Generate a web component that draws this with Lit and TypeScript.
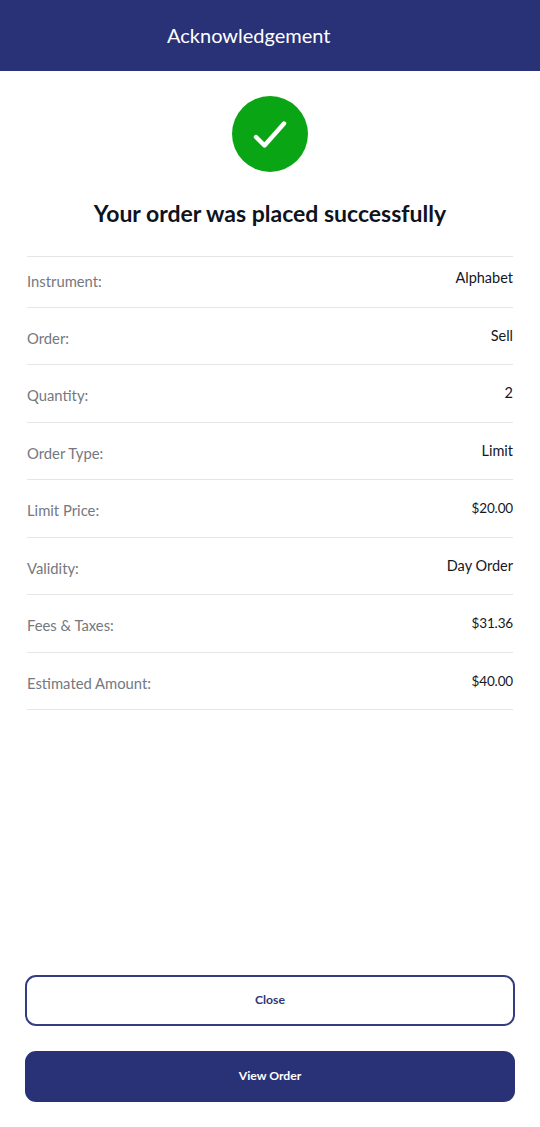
import { LitElement, html, css } from "lit";
import { customElement } from "lit/decorators.js";
import { classMap } from "lit/directives/class-map.js";

const rows: [string, string][] = [
  ["Instrument:", "Alphabet"],
  ["Order:", "Sell"],
  ["Quantity:", "2"],
  ["Order Type:", "Limit"],
  ["Limit Price:", "$20.00"],
  ["Validity:", "Day Order"],
  ["Fees & Taxes:", "$31.36"],
  ["Estimated Amount:", "$40.00"],
];

@customElement("app-root")
export class AppRoot extends LitElement {
  static styles = css`
    :host {
      display: flex;
      flex-direction: column;
      height: 1127px;
      background: #fff;
      font-family: "Lato", "Noto Sans", sans-serif;
    }
    .bar {
      height: 71px;
      flex: none;
      background: #2a3277;
      color: #fff;
      font-size: 20px;
      line-height: 70px;
      padding-left: 167px;
      box-sizing: border-box;
    }
    .icon {
      display: block;
      width: 76px;
      height: 76px;
      margin: 25px auto 0;
    }
    h1 {
      margin: 24px 0 0;
      text-align: center;
      font-size: 23px;
      line-height: 34px;
      font-weight: 700;
      color: #0e1320;
    }
    .list {
      margin: 26px 27px 0 27px;
      border-top: 1px solid #e6e6e6;
    }
    .row {
      display: flex;
      justify-content: space-between;
      height: 57.45px;
      box-sizing: border-box;
      border-bottom: 1px solid #e6e6e6;
      padding-top: 16px;
    }
    .row:first-child {
      height: 50.9px;
      padding-top: 10px;
    }
    .label {
      color: #747880;
      font-size: 14.8px;
      line-height: 22px;
      margin-top: 3px;
    }
    .value {
      color: #14171f;
      font-size: 14.5px;
      line-height: 22px;
      margin-top: 1px;
    }
    .value.money {
      font-size: 13.5px;
      letter-spacing: -0.15px;
    }
    .row:first-child .value {
      margin-top: 0;
    }
    .actions {
      margin-top: auto;
      padding: 0 25px 25px;
      display: flex;
      flex-direction: column;
      gap: 25px;
    }
    button {
      height: 51px;
      border-radius: 11px;
      font: 700 12.2px "Lato", "Noto Sans", sans-serif;
      box-sizing: border-box;
      padding: 0 0 2px;
    }
    .ghost {
      background: #fff;
      color: #2f3675;
      border: 2px solid #353c80;
    }
    .solid {
      background: #2a3277;
      color: #fff;
      border: none;
    }
  `;

  render() {
    return html`
      <div class="bar">Acknowledgement</div>
      <svg class="icon" viewBox="0 0 76 76">
        <circle cx="38" cy="38" r="38" fill="#0aa514" />
        <path d="M24 41 L32.5 49.5 L52 27.5" fill="none" stroke="#fff" stroke-width="4.4" stroke-linecap="round" stroke-linejoin="round" />
      </svg>
      <h1>Your order was placed successfully</h1>
      <div class="list">
        ${rows.map(
          ([l, v]) => html`<div class="row"><span class="label">${l}</span><span class=${classMap({ value: true, money: v.startsWith("$") })}>${v}</span></div>`
        )}
      </div>
      <div class="actions">
        <button class="ghost">Close</button>
        <button class="solid">View Order</button>
      </div>
    `;
  }
}
